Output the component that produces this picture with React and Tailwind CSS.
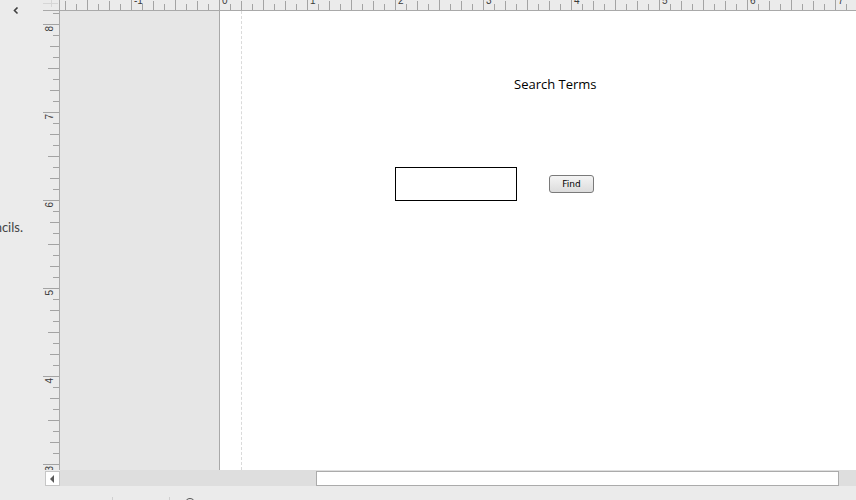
const TICK = '#a3a3a3';

function HRuler() {
  const ticks = [];
  for (let k = -14; k <= 57; k++) {
    const x = 159.5 + 11 * k;
    let h = 6;
    if (k % 8 === 0) h = 10;
    else if (k % 4 === 0) h = 10;
    else if (k % 2 === 0) h = 9;
    ticks.push(<line key={k} x1={x} x2={x} y1={10 - h} y2={10} stroke={TICK} strokeWidth="1" />);
  }
  const labels = [-1, 0, 1, 2, 3, 4, 5, 6, 7];
  return (
    <svg width="796" height="10" className="block">
      {ticks}
      {labels.map(v => (
        <text
          key={v}
          x={159.5 + 88 * v + 2.5}
          y="4"
          fontSize="10"
          fill="#3a3a3a"
          fontFamily="'Liberation Sans', Arial, sans-serif"
        >
          {v}
        </text>
      ))}
    </svg>
  );
}

function VRuler() {
  const ticks = [];
  for (let k = -1; k <= 41; k++) {
    const y = 13.5 + 11 * k;
    let w = 6;
    if (k % 8 === 0) w = 16;
    else if (k % 4 === 0) w = 11;
    else if (k % 2 === 0) w = 9;
    ticks.push(<line key={k} x1={16 - w} x2={16} y1={y} y2={y} stroke={TICK} strokeWidth="1" />);
  }
  const labels = [8, 7, 6, 5, 4, 3];
  return (
    <svg width="16" height="459" className="block">
      {ticks}
      {labels.map((v, i) => (
        <text
          key={v}
          transform={`translate(9.5 ${13.5 + 88 * i + 7}) rotate(-90)`}
          fontSize="10"
          fill="#3a3a3a"
          fontFamily="'Liberation Sans', Arial, sans-serif"
        >
          {v}
        </text>
      ))}
    </svg>
  );
}

function Page() {
  return (
    <div className="relative flex-1 bg-white pl-[21px]">
      <div className="h-full border-l border-dashed border-[#dadada]" />

      <div className="absolute left-[294px] top-[65px] text-[13px] leading-[16px] text-black whitespace-nowrap">
        Search Terms
      </div>

      <div className="absolute left-[175px] top-[156px] w-[122px] h-[34px] border border-black bg-white" />

      <button className="absolute left-[329px] top-[164px] w-[45px] h-[18px] rounded-[3px] border border-[#7a7a7a] bg-gradient-to-b from-[#f4f4f4] to-[#dcdcdc] flex items-center justify-center text-[9px] leading-none text-black font-['DejaVu_Sans',sans-serif]">
        Find
      </button>
    </div>
  );
}

function Scrollbar() {
  return (
    <div className="flex h-[16px]">
      <div className="w-[2px]" />
      <div className="w-[15px] h-[15px] mt-px bg-white border border-[#c6c6c6] flex items-center justify-center">
        <svg width="5" height="8">
          <polygon points="4,0 4,8 0,4" fill="#5a5a5a" />
        </svg>
      </div>
      <div className="flex-1 bg-[#dedede] pl-[256px]">
        <div className="w-[523px] h-[15px] mt-px bg-white border border-[#ababab]" />
      </div>
    </div>
  );
}

function StatusBar() {
  return (
    <div className="h-[14px] flex items-end bg-[#ebebeb]">
      <div className="ml-[112px] w-px h-[3px] bg-[#cfcfcf]" />
      <div className="ml-[56px] w-px h-[3px] bg-[#cfcfcf]" />
      <svg width="12" height="3" className="ml-[14px] block">
        <circle cx="6" cy="6.5" r="5" fill="none" stroke="#555" strokeWidth="1" />
      </svg>
    </div>
  );
}

export default function App() {
  return (
    <div className="w-[856px] h-[500px] overflow-hidden bg-[#ebebeb] flex flex-col font-['Open_Sans',sans-serif]">
      <div className="flex h-[486px]">
        <div className="w-[43px] flex flex-col">
          <svg width="6" height="8" className="mt-[7px] ml-[13px] block">
            <polyline points="4.5,0.5 1.5,3.5 4.5,6.5" fill="none" stroke="#404040" strokeWidth="1.6" />
          </svg>
          <div className="mt-[204px] w-[23px] overflow-hidden flex justify-end">
            <span className="whitespace-nowrap font-['Lato',sans-serif] text-[13px] leading-[16px] text-[#444]">
              Drag shapes from the stencils.
            </span>
          </div>
        </div>

        <div className="flex-1 flex flex-col">
          <div className="flex h-[11px]">
            <div className="w-[17px] h-[11px] border-r border-b border-[#a9a9a9] relative">
              <div className="absolute left-0 right-[1px] top-[3px] h-px bg-[#d6d6d6]" />
              <div className="absolute left-[8px] top-0 w-px h-[7px] bg-[#d6d6d6]" />
            </div>
            <div className="flex-1 border-b border-[#a9a9a9]">
              <HRuler />
            </div>
          </div>

          <div className="flex h-[459px]">
            <div className="w-[17px] border-r border-[#a9a9a9]">
              <VRuler />
            </div>
            <div className="w-[160px] bg-[#e6e6e6] border-r border-[#a9a9a9]" />
            <Page />
          </div>

          <Scrollbar />
        </div>
      </div>
      <StatusBar />
    </div>
  );
}
